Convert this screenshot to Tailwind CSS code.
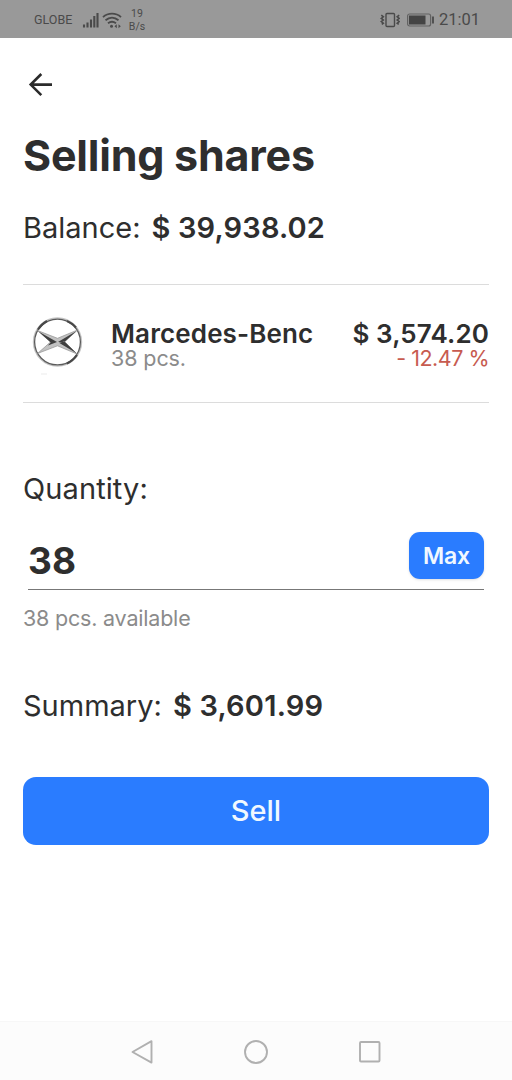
<!DOCTYPE html>
<html lang="en">
<head>
<meta charset="utf-8">
<title>Selling shares</title>
<script src="https://cdn.jsdelivr.net/npm/@tailwindcss/browser@4"></script>
</head>
<body class="flex h-[1080px] w-[512px] flex-col overflow-hidden bg-white font-[Inter,sans-serif] text-[#2e2e2e]">
  <header class="flex h-[38px] shrink-0 items-center bg-[#999999] pt-[1px] pr-[32px] pl-[34px] font-[Roboto,sans-serif] text-[#4a4a4a]">
    <span class="w-[48px] pt-[2px] text-[12.5px] leading-none whitespace-nowrap">GLOBE</span>
    <svg class="h-[18px] w-[42px] shrink-0" viewBox="0 0 42 18" fill="none" stroke="#4a4a4a">
      <path d="M2 13.500v3M5.500 11.500v5M9 8.500v8M12.300 5v11.500M15.500 2v14.500" stroke-width="2.100"/>
      <path d="M21 6.200C26 1.500 34 1.500 39 6.200M23.500 9.300C27.500 5.800 32.500 5.800 36.500 9.300M26 12.300C28.500 10.300 31.500 10.300 34 12.300" stroke-width="1.800"/>
      <circle cx="29.500" cy="15.200" r="1.500" fill="#4a4a4a" stroke="none"/>
      <path d="M32.500 15.300l2.300-2v4zM38.800 15.300l-2.300-2v4z" fill="#4a4a4a" stroke="none"/>
    </svg>
    <span class="ml-[4px] w-[18px] text-center text-[10.500px] leading-[13px]">19<br>B/s</span>
    <span class="grow"></span>
    <svg class="h-[16px] w-[20px] shrink-0" viewBox="0 0 20 16" fill="none" stroke="#4a4a4a" stroke-width="1.400">
      <rect x="6" y="1.500" width="8.500" height="13" rx="1"/>
      <path d="M1.300 3.200l2 1.600-2 1.600 2 1.600-2 1.600 2 1.600-1.500 1.200M19.200 3.200l-2 1.600 2 1.600-2 1.600 2 1.600-2 1.600 1.500 1.200" stroke-width="1.600"/>
    </svg>
    <svg class="ml-[6px] h-[14px] w-[30px] shrink-0" viewBox="0 0 30 14" fill="none">
      <rect x="1.600" y="1" width="23" height="12" rx="2" stroke="#626262" stroke-width="1.200"/>
      <rect x="3" y="2.500" width="16.500" height="9" fill="#444"/>
      <path d="M27 3.500v7" stroke="#4a4a4a" stroke-width="1.800"/>
    </svg>
    <span class="ml-[3px] pt-[2px] text-[16.500px] leading-none">21:01</span>
  </header>

  <main class="flex grow flex-col px-[23px]">
    <button class="mt-[34px] ml-[5px] h-[26px] w-[26px]" aria-label="Back">
      <svg class="h-[26px] w-[26px]" viewBox="0 0 26 26" fill="none" stroke="#2b2b2b" stroke-width="2.600"><path d="M24 12.600H3M13.300 2L2.700 12.600 13.300 23.200"/></svg>
    </button>
    <h1 class="mt-[27px] h-[60px] text-[43px] leading-[60px] font-bold tracking-[-0.22px] whitespace-nowrap">Selling shares</h1>
    <div class="mt-[23px] flex h-[40px] items-center text-[29px] leading-[40px] whitespace-nowrap">
      <span>Balance:</span><span class="ml-[11px] font-semibold tracking-[0.15px]">$ 39,938.02</span>
    </div>

    <section class="mt-[36px] flex h-[119px] items-start border-y border-[#dcdcdc]">
      <svg class="mt-[29px] ml-[7px] h-[62px] w-[56px] shrink-0" viewBox="0 0 56 62">
        <circle cx="27.500" cy="28" r="24" fill="none" stroke="#c4c4c4" stroke-width="1.400"/>
        <circle cx="27.500" cy="28" r="22.900" fill="none" stroke="#5c5c5c" stroke-width="1.300"/>
        <path d="M8 15.500A23.500 23.500 0 0 1 17 7M37 7A23.500 23.500 0 0 1 46 13.500M37 49.500A23.500 23.500 0 0 0 47 41" fill="none" stroke="#484848" stroke-width="2"/>
        <path d="M7.500 16.500L27.500 24.300 47.500 16 34.500 28 47 40 27.500 31.800 7.500 39.500 20.500 28z" fill="#c2c2c2" stroke="#929292" stroke-width=".7"/>
        <path d="M8.500 17.500L27 28 20.800 28.600zM20.500 28.400L27 28 18 31.500zM46.500 17L28 28 34.300 28zM46.500 39.300L29 28.700 34.500 27.500z" fill="#3f3f3f"/>
        <path d="M11 60h6" stroke="#eeeeee" stroke-width="1.200"/>
      </svg>
      <div class="mt-[36px] ml-[25px] grow whitespace-nowrap">
        <div class="text-[26px] leading-[26px] font-semibold tracking-[0.12px]">Marcedes-Benc</div>
        <div class="text-[21.500px] leading-[23px] tracking-[-0.1px] text-[#8b8b8b]">38 pcs.</div>
      </div>
      <div class="mt-[36px] text-right whitespace-nowrap">
        <div class="text-[26px] leading-[26px] font-semibold tracking-[0.12px]">$ 3,574.20</div>
        <div class="text-[21.500px] leading-[23px] tracking-[-0.5px] text-[#c75b50]">- 12.47 %</div>
      </div>
    </section>

    <label class="mt-[66px] h-[40px] text-[29px] leading-[40px] tracking-[0.1px]">Quantity:</label>
    <div class="mt-[22px] mr-[5px] ml-[5px] flex h-[59px] items-start border-b border-[#777] pt-[1px]">
      <span class="mt-[4px] grow text-[37px] leading-[50px] font-bold">38</span>
      <button class="h-[47px] w-[75px] rounded-[11px] bg-[#2a7cff] text-[23px] leading-[48px] font-semibold tracking-[-0.2px] text-[#f0f8ff] shadow-sm">Max</button>
    </div>
    <p class="mt-[13px] h-[30px] text-[21.500px] leading-[30px] tracking-[-0.2px] text-[#8b8b8b]">38 pcs. available</p>
    <div class="mt-[53px] flex h-[40px] items-center text-[29px] leading-[40px] whitespace-nowrap">
      <span>Summary:</span><span class="ml-[11px] font-semibold tracking-[0.2px]">$ 3,601.99</span>
    </div>
    <button class="mt-[51px] h-[68px] w-full rounded-[13px] bg-[#2a7cff] text-[29px] leading-[68px] font-medium text-[#f0f8ff]">Sell</button>
  </main>

  <nav class="flex h-[59px] shrink-0 items-center justify-center gap-[90px] border-t border-[#f7f7f7] bg-[#fcfcfc] pt-[1px]">
    <svg class="h-[26px] w-[24px]" viewBox="0 0 24 26" fill="none" stroke="#b0b0b0" stroke-width="1.900" stroke-linejoin="round"><path d="M21.500 2.200v21.400L2.500 13z"/></svg>
    <svg class="h-[26px] w-[24px]" viewBox="0 0 24 26" fill="none" stroke="#b0b0b0" stroke-width="1.900"><circle cx="12" cy="13" r="11"/></svg>
    <svg class="h-[26px] w-[24px]" viewBox="0 0 24 26" fill="none" stroke="#b0b0b0" stroke-width="1.900"><rect x="2" y="3" width="19.500" height="19.500" rx="1"/></svg>
  </nav>
</body>
</html>
